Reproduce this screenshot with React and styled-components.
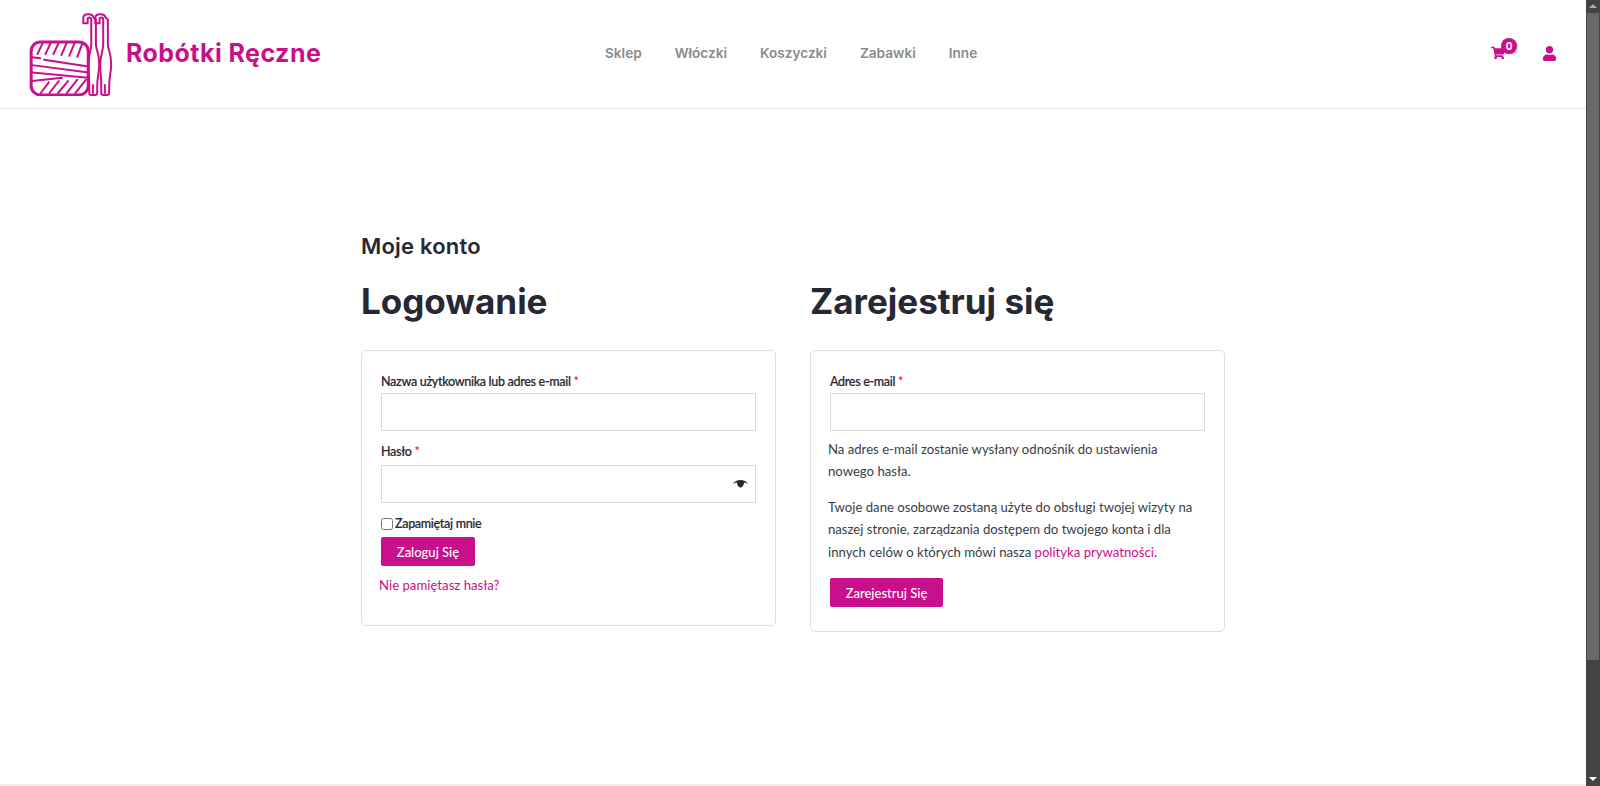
import React from "react";
import styled, { createGlobalStyle } from "styled-components";
import { FaShoppingCart, FaUser } from "react-icons/fa";

const PINK = "#c90f8b";

const GlobalStyle = createGlobalStyle`
  html, body {
    margin: 0;
    height: 100%;
    overflow: hidden;
    background: #fff;
  }
  body {
    font-family: "Lato", "Liberation Sans", sans-serif;
    color: #333;
  }
  * {
    box-sizing: border-box;
  }
`;

const Shell = styled.div`
  display: flex;
  height: 786px;
  overflow: hidden;
`;

const Page = styled.div`
  flex: 1;
  min-width: 0;
  display: flex;
  flex-direction: column;
  border-bottom: 2px solid #eeeeee;
`;

const Header = styled.header`
  height: 109px;
  flex: none;
  display: flex;
  align-items: center;
  border-bottom: 1px solid #e9e9e9;
`;

const Brand = styled.a`
  display: flex;
  align-items: center;
  gap: 13px;
  margin-left: 29px;
  width: 567px;
  text-decoration: none;
`;

const BrandName = styled.span`
  font-family: "Inter", "Liberation Sans", sans-serif;
  font-size: 25px;
  font-weight: 700;
  color: ${PINK};
  letter-spacing: 0.45px;
  white-space: nowrap;
  padding-bottom: 2px;
`;

const Nav = styled.nav`
  display: flex;
  gap: 33px;
  margin-left: 9px;
  padding-bottom: 2px;
`;

const NavLink = styled.a`
  font-family: "Inter", "Liberation Sans", sans-serif;
  font-size: 13.6px;
  font-weight: 600;
  color: #8b8b8b;
  text-decoration: none;
`;

const Actions = styled.div`
  margin-left: auto;
  margin-right: 29px;
  padding-bottom: 2px;
  display: flex;
  align-items: center;
  gap: 36px;
  color: ${PINK};
`;

const CartLink = styled.a`
  position: relative;
  display: flex;
  width: 15px;
  height: 15px;
  font-size: 14px;
  color: inherit;
`;

const Badge = styled.span`
  position: absolute;
  top: -8px;
  left: 10px;
  width: 16px;
  height: 16px;
  border-radius: 50%;
  background: ${PINK};
  color: #fff;
  font-family: "Inter", "Liberation Sans", sans-serif;
  font-size: 10px;
  font-weight: 700;
  line-height: 16px;
  text-align: center;
  box-shadow: 1px 1px 2px rgba(0, 0, 0, 0.2);
`;

const UserLink = styled.a`
  display: flex;
  font-size: 15px;
  color: inherit;
`;

const Main = styled.main`
  width: 864px;
  margin-left: 361px;
  padding-top: 122px;
`;

const PageTitle = styled.h2`
  margin: 0;
  font-family: "Inter", "Liberation Sans", sans-serif;
  font-size: 22px;
  font-weight: 600;
  line-height: 30px;
  letter-spacing: 0.2px;
  color: #262833;
`;

const Columns = styled.div`
  display: grid;
  grid-template-columns: 415px 415px;
  column-gap: 34px;
  align-items: start;
  margin-top: 15px;
`;

const ColumnTitle = styled.h1`
  margin: 0 0 24px;
  font-family: "Inter", "Liberation Sans", sans-serif;
  font-size: 35px;
  font-weight: 700;
  line-height: 50px;
  color: #262833;
`;

const Card = styled.form`
  border: 1px solid #dfdfdf;
  border-radius: 5px;
  padding: 20px 19px ${props => props.$bottom}px;
`;

const Field = styled.div`
  margin-bottom: ${props => props.$gap}px;
  position: relative;
`;

const Label = styled.label`
  display: block;
  font-size: 12.5px;
  font-weight: 500;
  letter-spacing: -0.3px;
  -webkit-text-stroke: 0.2px #262833;
  line-height: 22px;
  color: #262833;
  margin-bottom: ${props => props.$after || 0}px;
`;

const Required = styled.span`
  color: #ff0000;
  -webkit-text-stroke: 0;
  letter-spacing: 0;
`;

const Input = styled.input`
  display: block;
  width: 100%;
  height: 38px;
  border: 1px solid #dcdcdc;
  background: #fff;
  padding: 0 12px;
  outline: none;
`;

const EyeButton = styled.span`
  position: absolute;
  right: 8px;
  bottom: 15px;
  display: flex;
`;

const RememberRow = styled.label`
  display: flex;
  align-items: center;
  gap: 1px;
  font-size: 12.5px;
  font-weight: 500;
  letter-spacing: -0.3px;
  -webkit-text-stroke: 0.2px #262833;
  line-height: 20px;
  color: #262833;
  margin-bottom: 3px;
`;

const Checkbox = styled.input`
  width: 12px;
  height: 12px;
  margin: 0 1px 0 0;
`;

const SubmitButton = styled.button`
  display: block;
  height: 29px;
  width: ${props => props.$width}px;
  padding: 0;
  border: none;
  border-radius: 2px;
  background: ${PINK};
  color: #fff;
  font-family: "Lato", "Liberation Sans", sans-serif;
  font-size: 13px;
  font-weight: 500;
`;

const LostLink = styled.a`
  display: block;
  margin: 8px 0 0 -2px;
  font-size: 13.2px;
  line-height: 22px;
  color: ${PINK};
  text-decoration: none;
`;

const Paragraph = styled.p`
  margin: 0 0 ${props => props.$after}px -2px;
  font-size: 13.15px;
  line-height: 22.4px;
  color: #3a3d47;
`;

const InlineLink = styled.a`
  color: ${PINK};
  text-decoration: none;
`;

const Scrollbar = styled.aside`
  flex: none;
  width: 14px;
  background: #434343;
  display: flex;
  flex-direction: column;
  align-items: center;
  padding: 4px 1px 5px;
`;

const ScrollThumb = styled.div`
  width: 12px;
  height: 647px;
  margin-top: 5px;
  background: #686868;
`;

const ScrollArrow = styled.div`
  width: 0;
  height: 0;
  border-left: 4px solid transparent;
  border-right: 4px solid transparent;
  ${props =>
    props.$up
      ? "border-bottom: 4px solid #a8a8a8;"
      : "border-top: 4px solid #fff; margin-top: auto;"}
`;

// one crochet hook, in the same coordinates as the logo viewBox
const HOOK =
  "M190 52V36C190 22 218 20 222 36L228 40V115C228 130 238 140 238 175C238 200 232 215 232 240V262Q232 268 225 268H215Q208 268 208 262V235C208 210 205 200 205 175C205 150 214 135 214 115V42C214 32 203 32 203 42V52Z";

function YarnLogo() {
  return (
    <svg
      width="84"
      height="83"
      viewBox="27 21 252 250"
      fill="none"
      stroke={PINK}
      strokeWidth="6"
      strokeLinecap="round"
      strokeLinejoin="round"
    >
      <rect x="33" y="108" width="172" height="160" rx="28" strokeWidth="9" />
      <path d="M52 145l15-32M76 145l15-32M100 145l15-32M124 148l15-35M148 150l15-37M172 153l15-40" />
      <path d="M36 154l24 3M72 162l133 20M36 178l169 22M36 200l169 16" />
      <path d="M36 226l90-10M62 262l24-32M88 262l28-36M114 262l30-36M140 262l32-40M166 262l32-40" />
      <path d={HOOK} />
      <path d={HOOK} transform="translate(36 0)" />
      <path d="M219 238V262M255 238V262" />
    </svg>
  );
}

function EyeIcon() {
  return (
    <svg width="15" height="8" viewBox="0 0 15 8" fill="#262833">
      <path d="M0 3.500C2 1 4.800 0 7.500 0S13 1 15 3.500C14 3.500 12.500 2.800 11 2.500C11 5 9.500 7.500 7.500 7.500S4 5 4 2.500C2.500 2.800 1 3.500 0 3.500Z" />
    </svg>
  );
}

export default function App() {
  return (
    <Shell>
      <GlobalStyle />
      <Page>
        <Header>
          <Brand href="#">
            <YarnLogo />
            <BrandName>Robótki Ręczne</BrandName>
          </Brand>
          <Nav>
            {["Sklep", "Włóczki", "Koszyczki", "Zabawki", "Inne"].map(item => (
              <NavLink href="#" key={item}>
                {item}
              </NavLink>
            ))}
          </Nav>
          <Actions>
            <CartLink href="#">
              <FaShoppingCart />
              <Badge>0</Badge>
            </CartLink>
            <UserLink href="#">
              <FaUser />
            </UserLink>
          </Actions>
        </Header>
        <Main>
          <PageTitle>Moje konto</PageTitle>
          <Columns>
            <section>
              <ColumnTitle>Logowanie</ColumnTitle>
              <Card $bottom={29}>
                <Field $gap={10}>
                  <Label>
                    Nazwa użytkownika lub adres e-mail <Required>*</Required>
                  </Label>
                  <Input type="text" />
                </Field>
                <Field $gap={11}>
                  <Label $after={2}>
                    Hasło <Required>*</Required>
                  </Label>
                  <Input type="password" />
                  <EyeButton>
                    <EyeIcon />
                  </EyeButton>
                </Field>
                <RememberRow>
                  <Checkbox type="checkbox" />
                  Zapamiętaj mnie
                </RememberRow>
                <SubmitButton type="button" $width={94}>
                  Zaloguj Się
                </SubmitButton>
                <LostLink href="#">Nie pamiętasz hasła?</LostLink>
              </Card>
            </section>
            <section>
              <ColumnTitle>Zarejestruj się</ColumnTitle>
              <Card $bottom={24}>
                <Field $gap={7}>
                  <Label>
                    Adres e-mail <Required>*</Required>
                  </Label>
                  <Input type="email" />
                </Field>
                <Paragraph $after={13}>
                  Na adres e-mail zostanie wysłany odnośnik do ustawienia nowego hasła.
                </Paragraph>
                <Paragraph $after={15}>
                  Twoje dane osobowe zostaną użyte do obsługi twojej wizyty na naszej stronie,
                  zarządzania dostępem do twojego konta i dla innych celów o których mówi nasza{" "}
                  <InlineLink href="#">polityka prywatności</InlineLink>.
                </Paragraph>
                <SubmitButton type="button" $width={113}>
                  Zarejestruj Się
                </SubmitButton>
              </Card>
            </section>
          </Columns>
        </Main>
      </Page>
      <Scrollbar>
        <ScrollArrow $up />
        <ScrollThumb />
        <ScrollArrow />
      </Scrollbar>
    </Shell>
  );
}
